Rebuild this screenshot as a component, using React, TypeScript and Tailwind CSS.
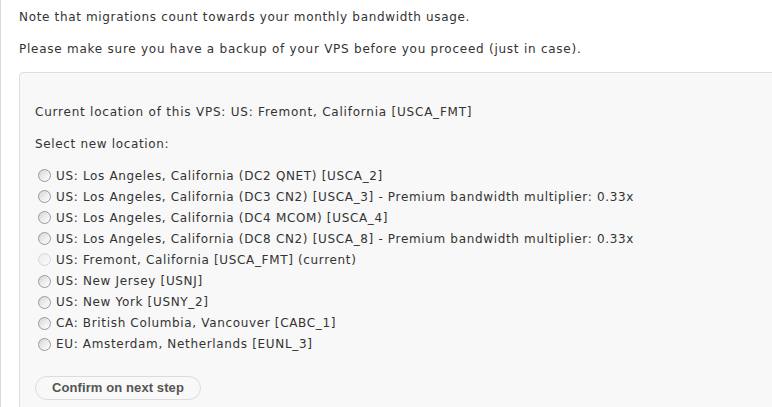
import React from "react";

const rows: { text: string; disabled?: boolean }[] = [
  { text: "US: Los Angeles, California (DC2 QNET) [USCA_2]" },
  { text: "US: Los Angeles, California (DC3 CN2) [USCA_3] - Premium bandwidth multiplier: 0.33x" },
  { text: "US: Los Angeles, California (DC4 MCOM) [USCA_4]" },
  { text: "US: Los Angeles, California (DC8 CN2) [USCA_8] - Premium bandwidth multiplier: 0.33x" },
  { text: "US: Fremont, California [USCA_FMT] (current)", disabled: true },
  { text: "US: New Jersey [USNJ]" },
  { text: "US: New York [USNY_2]" },
  { text: "CA: British Columbia, Vancouver [CABC_1]" },
  { text: "EU: Amsterdam, Netherlands [EUNL_3]" },
];

function Radio({ disabled }: { disabled?: boolean }) {
  return disabled ? (
    <span className="inline-block shrink-0 w-[13px] h-[13px] rounded-full border border-[#d6d6d6] bg-gradient-to-br from-[#ececec] to-[#fafafa]" />
  ) : (
    <span className="inline-block shrink-0 w-[13px] h-[13px] rounded-full border border-[#9a9a9a] bg-gradient-to-br from-[#d4d4d4] via-[#ececec] to-[#ffffff]" />
  );
}

export default function App() {
  return (
    <div
      className="w-[772px] h-[407px] overflow-hidden bg-white border-l border-[#d9d9d9] text-[12px] tracking-[0.66px] text-[#333] leading-[20px]"
      style={{ fontFamily: '"DejaVu Sans", Verdana, sans-serif' }}
    >
      <div className="pl-[18px] pt-[7px]">
        <p className="whitespace-nowrap">Note that migrations count towards your monthly bandwidth usage.</p>
        <p className="mt-[12px] whitespace-nowrap tracking-[0.75px]">Please make sure you have a backup of your VPS before you proceed (just in case).</p>
        <div className="mt-[13px] w-[800px] rounded-[4px] border border-[#dedede] bg-[#f8f8f8] pl-[15px] pt-[29px] pb-[20px]">
          <p className="whitespace-nowrap tracking-[0.78px]">Current location of this VPS: US: Fremont, California [USCA_FMT]</p>
          <p className="mt-[12px]">Select new location:</p>
          <div className="mt-[11px] flex flex-col">
            {rows.map((r, i) => (
              <div key={i} className="flex items-center h-[21.1px] pl-[3px] whitespace-nowrap">
                <Radio disabled={r.disabled} />
                <span className="ml-[5px]">{r.text}</span>
              </div>
            ))}
          </div>
          <button
            className="mt-[21px] h-[24px] w-[166px] rounded-full border border-[#dcdcdc] bg-[#f8f8f8] text-[13px] tracking-[0.1px] font-bold text-[#555] flex items-center justify-center"
            style={{ fontFamily: '"Liberation Sans", Arial, sans-serif' }}
          >
            Confirm on next step
          </button>
        </div>
      </div>
    </div>
  );
}
